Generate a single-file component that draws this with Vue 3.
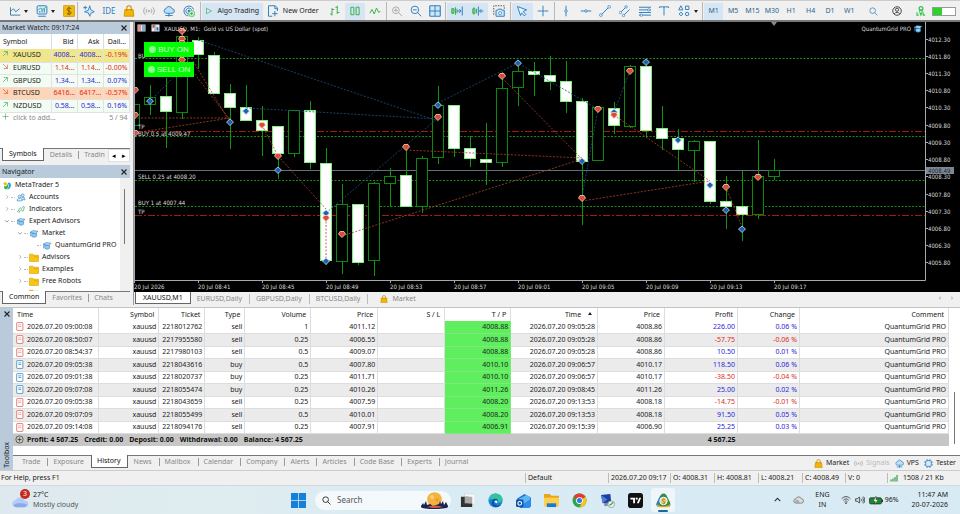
<script setup>
const b = '#2f7fc1'
const g = '#35b24a'
const s = (c, d, extra = '') => `<path d="${d}" fill="none" stroke="${c}" stroke-width="1.3" ${extra}/>`
const bag = '<path d="M2.500 6h11l1 9h-13z" fill="#f2b600" stroke="#c98a00"/><path d="M5 8V4a3 3 0 0 1 6 0v4" fill="none" stroke="#c98a00" stroke-width="1.400"/>'
const cloud = '<path d="M4 11a3.200 3.200 0 0 1 .3-6.300A4 4 0 0 1 12 5a3 3 0 0 1 .3 6z" fill="#bfe0f7" stroke="#2f7fc1" stroke-width="1.200"/><path d="M8 11v3M3 14h10" stroke="#2f7fc1" stroke-width="1.200"/><circle cx="8" cy="14" r="1.300" fill="#2f7fc1"/>'
const hat = '<path d="M4 8v5c2 2 6 2 8.500 0V8z" fill="#8ecbf0" stroke="#2f7fc1"/><path d="M1 6l5-3 9 1-4 4z" fill="#b9e0f7" stroke="#2f7fc1" stroke-width="1.200"/><path d="M2 6.500V13" stroke="#2f7fc1" stroke-width="1.200"/>'
const icons = {
  line: s('#3c7fae', 'M2 3v10.500h13') + s('#3c7fae', 'M3 8l3-3 3 4 5-4'),
  frame: '<rect x="1.500" y="1" width="13" height="11" rx="1.500" fill="#d8ecfa" stroke="#2f7fc1" stroke-width="1.300"/>' + s(b, 'M3 15h10M5 10V8M8 10V6M11 10V5') + s(g, 'M3 7l3-3 3 2 4-3'),
  dollar: '<rect x=".5" y=".5" width="15" height="15" rx="1.500" fill="#f0b90b" stroke="#c99700"/><path d="M11 5C9 3 5 4 5.500 6.300S11 8.500 11 10.300 6.500 13 5 11M8 2.500v11" fill="none" stroke="#7c5a00" stroke-width="1.300"/>',
  sparkle: '<path d="M9 1l1.500 5.500L15 9l-4.500 2L9 15l-2-4.500L2 9l5-2z" fill="#cfe7f8" stroke="#2f7fc1" stroke-width="1.200"/>' + s(b, 'M3 1v5M.5 3.500h5'),
  bag,
  signal: '<circle cx="8" cy="8" r="1.500" fill="#aaa"/>' + s('#aaa', 'M5.500 5a4 4 0 0 0 0 6M10.500 5a4 4 0 0 1 0 6M3 3a7 7 0 0 0 0 10M13 3a7 7 0 0 1 0 10'),
  cloud,
  target: s(b, 'M14 6A6.500 6.500 0 1 0 7 14.500M11.500 6.500A4 4 0 1 0 7 12') + '<circle cx="8" cy="8" r="1.800" fill="#2f7fc1"/><circle cx="11.500" cy="11.500" r="4" fill="#d9f5dc" stroke="#35b24a"/>' + s(g, 'M9.500 11.500h4M11.500 9.500v4'),
  play: s(g, 'M3 2.500l10 5.500-10 5.500z'),
  doc: s(b, 'M11 1H2v14h5M11 1l3 3v4M10.500 1v4H14') + s(b, 'M7 11.500h7M10.500 8v7', 'stroke-width="2"'),
  bars: s(g, 'M4 4v10M1.500 12H4M4 6h3M11 1v11M8.500 3H11M11 10h3'),
  candles: s(g, 'M2.500 3h4v10h-4zM9.500 3h4v10h-4z'),
  wave: s(g, 'M1 11l3-5 3 6 3-8 3 6 2-2'),
  zin: s('#aaa', 'M11 7A4.500 4.500 0 1 1 2 7a4.500 4.500 0 0 1 9 0zM10 10l5 5M4 7h5M6.500 4.500v5'),
  zout: s(b, 'M11.500 6.500a5 5 0 1 1-10 0 5 5 0 0 1 10 0zM10 10l5 5M4 6.500h5'),
  grid: '<rect x="1" y="1" width="14" height="14" rx="1" fill="#cfe7f8" stroke="#2f7fc1" stroke-width="1.500"/>' + s(b, 'M8 1v14M1 8h14'),
  shiftr: s(g, 'M2.500 4v8M1 5h3v6H1zM6 3v10M8 5v6') + s(b, 'M8 8h5M11 5.500L13.500 8 11 10.500M15 2v12'),
  shiftl: s(g, 'M2.500 3v10M1 5h3v6H1zM6 5v6') + s(b, 'M8.500 2v12M15 8h-5M12.500 5.500L10 8l2.500 2.500'),
  camera: s('#555', 'M1 13V1h14v4', 'stroke-dasharray="2 1.500"') + '<path d="M4 7h2l1-1.500h4L12 7h3v8H4z" fill="#cfe7f8" stroke="#2f7fc1" stroke-width="1.300"/><circle cx="9.500" cy="11" r="2" fill="#fff" stroke="#2f7fc1"/>',
  cursor: '<path d="M2 2l12 4.500-4.500 2.200L13 12.500 11 14.500 7.500 10.500 6 14z" fill="#e8f4fc" stroke="#2f7fc1" stroke-width="1.300"/>',
  cross: s(b, 'M8 1v5M8 10v5M1 8h5M10 8h5M8 6v4M6 8h4'),
  vline: s(b, 'M8 1v14') + '<circle cx="8" cy="8" r="1.700" fill="#d9ecfa" stroke="#2f7fc1"/>',
  hline: s(b, 'M1 8h14') + '<circle cx="8" cy="8" r="1.700" fill="#d9ecfa" stroke="#2f7fc1"/>',
  trend: s(b, 'M3 13L13 3') + '<circle cx="2.500" cy="13.500" r="1.800" fill="#fff" stroke="#2f7fc1"/><circle cx="13.500" cy="2.500" r="1.800" fill="#fff" stroke="#2f7fc1"/>',
  channel: s(b, 'M2 10L9 3M6 14l8-8') + '<circle cx="2" cy="10" r="1.600" fill="#fff" stroke="#2f7fc1"/><circle cx="9.500" cy="2.500" r="1.600" fill="#fff" stroke="#2f7fc1"/><circle cx="6" cy="14" r="1.600" fill="#fff" stroke="#2f7fc1"/>',
  fib: s(b, 'M0 3h16M0 6.500h16M0 10h16M0 13.500h16') + '<circle cx="13" cy="6.500" r="1.600" fill="#fff" stroke="#2f7fc1"/><circle cx="3" cy="13.500" r="1.600" fill="#fff" stroke="#2f7fc1"/>',
  text: s(b, 'M2 4V2.500h12V4M8 2.500V14'),
  shapes: s(b, 'M1 6.500L3.800 1l2.700 5.500zM10 1.500h4.500V6H10zM14.500 12a2.300 2.300 0 1 1-4.600 0 2.300 2.300 0 0 1 4.600 0zM4 9.500L6.500 12 4 14.500 1.500 12z'),
  search: s(b, 'M11.500 6.500a5 5 0 1 1-10 0 5 5 0 0 1 10 0zM10 10l5 5', 'stroke-width="1.600"'),
  user: '<circle cx="8" cy="8" r="6.800" fill="none" stroke="#333" stroke-width="1.400"/><circle cx="8" cy="6" r="2.500" fill="none" stroke="#333" stroke-width="1.400"/>' + s('#333', 'M3.500 12.500c2-3 7-3 9 0'),
  level: '<circle cx="8" cy="4" r="3" fill="none" stroke="#35c24a" stroke-width="2"/><path d="M5 9l3-3 3 3M1.500 10v4.500h3M6 10l1.700 4.500L9.500 10M11.500 10v4.500h3" fill="none" stroke="#35c24a" stroke-width="1.800"/>',
  hat,
  up: s('#2ca04a', 'M3 13L12 4M5 3.500h7.500V11', 'stroke-linecap="square"'),
  down: s('#e0452c', 'M3 3l9 9M12.500 5v7.500H5', 'stroke-linecap="square"'),
  plus: s('#35a24a', 'M8 1v14M1 8h14'),
  close: '<path d="M3 3l10 10M13 3L3 13" stroke="#222" stroke-width="2.200"/>',
  right: s('#777', 'M6 3l5 5-5 5'),
  downc: s('#333', 'M3 6l5 5 5-5'),
  mt: '<path d="M1 4C4 1 8 2 8 5s-3 4-5 2z" fill="#f2c20c"/><path d="M9 4c3-3 6 0 6 4s-3 7-7 7c3-3 5-7 1-11z" fill="#2b9be0"/><path d="M3 9c3 1 6 0 6-4 3 4 1 9-3 10-3 0-4-4-3-6z" fill="#38b44a"/>',
  people: '<path d="M1 14c0-4 2-5 4.500-5S10 10 10 14z" fill="#d8ecfa" stroke="#2f7fc1"/><circle cx="5.500" cy="6" r="2.500" fill="#d8ecfa" stroke="#2f7fc1"/><circle cx="11" cy="4" r="2.500" fill="#d8ecfa" stroke="#2f7fc1"/><path d="M9 8c4-2 6 0 6 4h-5" fill="#b9dcf5" stroke="#2f7fc1"/>',
  indi: s(g, 'M1 12c3 0 3-7 6-7s1 6 4 6 1-8 4-8') + s(b, 'M4 14l3-5 M10 5l3-3'),
  folder: '<path d="M0 2h6l1.500 2H16v11H0z" fill="#f9c513" stroke="#d59b00"/><path d="M9 4.500V7H16" fill="none" stroke="#d59b00"/>',
  chip: '<rect x="3" y="3" width="10" height="10" rx="1.500" fill="#d8ecfa" stroke="#2f7fc1" stroke-width="1.500"/>' + s(b, 'M5.500 0v3M10.500 0v3M5.500 13v3M10.500 13v3M0 5.500h3M0 10.500h3M13 5.500h3M13 10.500h3'),
  sell: '<rect x="3" y="1" width="11" height="14" rx="1" fill="#fff" stroke="#e0554c" stroke-width="1.300"/><path d="M6 5h2M9.500 5h1.500M6 8h2M9.500 8h1.500" stroke="#e0554c" stroke-width="1.300"/>',
  buy: '<rect x="3" y="1" width="11" height="14" rx="1" fill="#fff" stroke="#2f7fc1" stroke-width="1.300"/><path d="M6 5h5M6 8h5" stroke="#2f7fc1" stroke-width="1.300"/>',
  circ: '<circle cx="8" cy="8" r="6.500" fill="none" stroke="#333" stroke-width="1.200"/>' + s('#333', 'M8 4.500v7M4.500 8h7'),
  net: '<path d="M1 15v-4M5 15V9M9 15V6M13 15V2" stroke="#2ca04a" stroke-width="2.400"/>',
  win: '<path d="M0 0h7.600v7.600H0zM8.400 0H16v7.600H8.400zM0 8.400h7.600V16H0zM8.400 8.400H16V16H8.400z" fill="#1580d8"/>',
  glass: '<path d="M11.500 6.500a5 5 0 1 1-10 0 5 5 0 0 1 10 0zM10 10l5 5" fill="none" stroke="#333" stroke-width="1.700"/>',
  tasks: '<rect x="5" y="1" width="11" height="11" fill="#f6f6f6" stroke="#ccc" stroke-width=".5"/><path d="M1 4h8v7h4v4H1z" fill="#333"/><path d="M5 4h8v7H5z" fill="#aaa"/>',
  edge: '<circle cx="8" cy="8" r="7.500" fill="#1683d8"/><path d="M.6 8C1 3.500 4 .5 8 .5s7.500 3 7.500 6.500c0 2-2 3.500-4.500 3.500 1-4-7-5.500-10.400-2.500z" fill="#35c2a0"/><path d="M6 9c0 4 4 6 8 3-2 4-9 4-10-1 0-3 2-5 4-5s3 2 2 3.500C9 8 7 7.500 6 9z" fill="#0b4f9c"/><path d="M10 10.500c-1 1-2-.5-3-1 0-2 3-2 3-.5z" fill="#e8f8ff"/>',
  outlook: '<path d="M1 6l8-5 7 4v9l-3 2H4z" fill="#1d6fd1"/><path d="M3 6l8-4 4 2v4L9 12z" fill="#5ab8f5"/><path d="M6 13l10-7v8l-2 2H6z" fill="#2d8ceb"/><rect y="7" width="8" height="8" rx="1.500" fill="#0f4fa8"/><circle cx="4" cy="11" r="2" fill="none" stroke="#fff" stroke-width="1.200"/>',
  explorer: '<path d="M0 1h6l2 2h8v10H0z" fill="#eaa41a"/><path d="M0 5h16v9.500H0z" fill="#fcd04f"/><path d="M3 11h10v4H3z" fill="#1c78cf"/>',
  chrome: '<circle cx="8" cy="8" r="7.500" fill="#32a350"/><path d="M8 8L1.500 4.200A7.500 7.500 0 0 1 14.500 4.300z" fill="#e23c2f"/><path d="M8 8l6.500-3.700A7.500 7.500 0 0 1 8 15.500l3-6z" fill="#f9c51c"/><circle cx="8" cy="8" r="3.600" fill="#fff"/><circle cx="8" cy="8" r="2.700" fill="#2f78e8"/>',
  pc: '<path d="M1 2l10-1 1 9-9 1z" fill="#1c3f9e"/><path d="M1 2l7 5-5 4z" fill="#4d7cdc"/><path d="M4 11l6-1 1 3-6 1z" fill="#7d8ca8"/><circle cx="12" cy="12" r="3.600" fill="#e7efe8" stroke="#9aa"/>' + s('#35a24a', 'M10 13l2-1 2-2'),
  tv: '<rect width="16" height="16" rx="3" fill="#111"/><path d="M2.500 5h5v6H5.500V7h-3zM11.500 11h-2L12 5h2z" fill="#fff"/><circle cx="9.300" cy="6" r="1.100" fill="#fff"/>',
  mtbig: '<path d="M5 2c2-2 4-2 6 0l4 8c1 3 0 5-3 5H4c-3 0-4-2-3-5z" fill="#378b42"/><path d="M4 4l3-2-3 8-1 4C0 14 0 12 1 10z" fill="#2a7fc0"/><path d="M1 12c4 3 10 3 14 0-.3 2-1 3.300-3 3.300H4c-2 0-3-1.300-3-3.300z" fill="#e8b41e"/><circle cx="8" cy="8.500" r="4" fill="#e8cf77" stroke="#fff"/><path d="M9.500 7C8 6 6.500 6.500 7 8s3 1 2.500 2.500S7.500 11.500 6.500 10.500" fill="none" stroke="#8a6a10" stroke-width=".8"/>',
  upc: '<path d="M3 10l5-5 5 5" fill="none" stroke="#333" stroke-width="1.800"/>',
  cloudy: '<path d="M4 13a3.500 3.500 0 0 1 0-7A4.500 4.500 0 0 1 12.500 6a3.500 3.500 0 0 1 0 7z" fill="#ddd" stroke="#555"/><path d="M4 13a3.500 3.500 0 0 1 0-5c3-1 5 1 6 5z" fill="#aaa"/>',
  wifi: s('#333', 'M1 6c4-4.500 10-4.500 14 0M3.500 8.500c3-3 6-3 9 0M5.500 11c2-2 3-2 5 0') + '<circle cx="8" cy="13" r="1.300" fill="#333"/>',
  sound: s('#333', 'M1 6h3l3-3v10l-3-3H1zM9.500 6c1 1 1 3 0 4M11.500 4c2.500 2 2.500 6 0 8M13.500 2.500c3 3 3 8 0 11'),
  battery: '<rect x=".5" y="4" width="17.500" height="9" rx="2" fill="#1c8a2c" stroke="#222"/><path d="M19.300 6.500v4" stroke="#222" stroke-width="1.500"/><path d="M10 1.500L6 9h3l-.5 4.500L13 7h-3z" fill="#fff" stroke="#222" stroke-width=".6"/>',
  book: '<rect width="16" height="14" y="1" fill="#dfe8ee"/><path d="M1 3h6v2H1zM1 7h6v2H1zM1 11h6v2H1z" fill="#d8452e"/><path d="M9 3h6v2H9zM9 7h6v2H9zM9 11h6v2H9z" fill="#2f6fb0"/>',
  trade: '<rect width="16" height="14" y="1" fill="#e8eef2"/><path d="M2 2v7l4-3V2z" fill="#d8452e"/><path d="M10 13V5l4 3v5z" fill="#2f6fb0"/><path d="M7 2v12" stroke="#333"/>',
}
const marketTools = [['sparkle', 'Assistant'], ['ide', 'IDE'], ['bag', 'Market'], ['signal', 'Signals'], ['cloud', 'VPS'], ['target', 'Community']]
const chartTools = [
  [['bars', 'Bar chart'], ['candles', 'Candlesticks', true], ['wave', 'Line chart']],
  [['zin', 'Zoom in'], ['zout', 'Zoom out'], ['grid', 'Tile windows']],
  [['shiftr', 'Scroll to end', true], ['shiftl', 'Chart shift', true], ['camera', 'Screenshot']],
  [['cursor', 'Cursor', true], ['cross', 'Crosshair']],
]
const drawTools = ['vline', 'hline', 'trend', 'channel', 'fib', 'text', 'shapes']
const frames = ['M1', 'M5', 'M15', 'M30', 'H1', 'H4', 'D1', 'W1']

const quotes = [
  ['XAUUSD', '4008...', '4008...', '-0.19%', 'up', 'gold', 'n', 'r'],
  ['EURUSD', '1.14...', '1.14...', '-0.00%', 'down', '', 'r', 'r'],
  ['GBPUSD', '1.34...', '1.34...', '0.07%', 'up', '', 'n', 'n'],
  ['BTCUSD', '6416...', '6417...', '-0.57%', 'down', 'peach', 'r', 'r'],
  ['NZDUSD', '0.58...', '0.58...', '0.16%', 'up', '', 'n', 'n'],
]
const tree = [
  ['Accounts', 'people', 'right', 0], ['Indicators', 'indi', 'right', 0], ['Expert Advisors', 'hat', 'downc', 0],
  ['Market', 'hat', 'downc', 1], ['QuantumGrid PRO', 'hat', '', 2],
  ['Advisors', 'folder', 'right', 1], ['Examples', 'folder', 'right', 1], ['Free Robots', 'folder', 'right', 1], ['', 'folder', '', 1],
]

// slot, high, low, body top, body bottom, 1 = falling
const candles = [
  [0, 82, 103, 82, 103, 0], [1, 63, 93, 75, 82, 0], [2, 56, 126, 74, 90, 1], [3, 8, 97, 14, 90, 0], [4, 15, 47, 18, 33, 1],
  [5, 30, 72, 33, 72, 1], [6, 62, 127, 71, 86, 1], [7, 63, 99, 85, 99, 1], [8, 84, 134, 98, 109, 1], [9, 104, 157, 104, 132, 1],
  [10, 88, 135, 88, 131, 0], [11, 79, 147, 88, 141, 1], [12, 126, 243, 141, 239, 1], [13, 162, 252, 182, 239, 0], [14, 182, 243, 182, 241, 1],
  [15, 160, 254, 161, 238, 0], [16, 146, 185, 154, 161, 0], [17, 125, 185, 153, 185, 1], [18, 134, 191, 136, 184, 0], [19, 64, 142, 83, 135, 0],
  [20, 83, 135, 83, 127, 1], [21, 114, 145, 126, 137, 1], [22, 101, 163, 137, 141, 1], [23, 50, 145, 66, 140, 0], [24, 38, 84, 49, 65, 0],
  [25, 40, 74, 49, 53, 1], [26, 34, 68, 53, 60, 1], [27, 39, 91, 59, 80, 1], [28, 76, 203, 79, 140, 1], [29, 85, 138, 85, 138, 0],
  [30, 80, 112, 86, 104, 1], [31, 43, 106, 44, 104, 0], [32, 37, 116, 44, 109, 1], [33, 84, 128, 106, 117, 1], [34, 107, 149, 116, 128, 1],
  [35, 118, 160, 119, 128, 0], [36, 119, 182, 119, 180, 1], [37, 154, 207, 179, 185, 1], [38, 149, 219, 184, 193, 1], [39, 118, 197, 154, 192, 0],
  [40, 137, 158, 148, 154, 0],
]
const wicks = c => `M${c[0] * 16 + 0.5} ${c[1]}V${c[3]}M${c[0] * 16 + 0.5} ${c[4]}V${c[2]}`
const reds = [[48, 9], [48, 17], [48, 21], [48, 38], [1, 68], [1, 93], [1, 111], [128, 103], [144, 134], [192, 196], [208, 212], [272, 125], [304, 95], [368, 54], [448, 176], [464, 87], [480, 93], [496, 49], [592, 165], [624, 155]]
const blues = [[16, 79], [96, 100], [112, 89], [144, 148], [192, 191], [192, 239], [304, 83], [384, 41], [448, 139], [480, 90], [512, 40], [544, 118], [576, 163], [592, 188], [608, 207]]
const redPath = 'M48 21L96 100M50 38L96 98M0 111L96 96M0 96H96M128 103L144 134L192 187M192 196V239M208 214L448 137M272 128L448 136M368 56L448 137M448 179L576 159M480 93L576 159M592 165L608 205M48 9V38'
const bluePath = 'M16 79L48 47M64 18L304 99M112 86L304 97M192 191L304 96M304 81L384 41L464 87M448 175L464 87M480 90L496 49'
const prices = ['4012.30', '4011.80', '4011.30', '4010.80', '4010.30', '4009.80', '4009.30', '4008.80', '4008.30', '4007.80', '4007.30', '4006.80', '4006.30', '4005.80']
const priceY = i => Math.round(17.5 + i * 17.23)
const times = ['2026', '08:41', '08:45', '08:49', '08:53', '08:57', '09:01', '09:05', '09:09', '09:13', '09:17']
const orders = [['BU', 36], ['TP', 107], ['BUY 0.5 at 4009.47', 114], ['SELL 0.25 at 4008.20', 157], ['BUY 1 at 4007.44', 183], ['TP', 192]]

const cols = [['Time', 86], ['Symbol', 60], ['Ticket', 46], ['Type', 40], ['Volume', 66], ['Price', 67], ['S / L', 67], ['T / P', 66], ['Time', 87], ['Price', 67], ['Profit', 73], ['Change', 62], ['Comment', 149]]
const deals = [
  ['2026.07.20 09:00:08', '2218012762', 'sell', '1', '4011.12', '4008.88', '2026.07.20 09:05:28', '4008.86', '226.00', '0.06 %'],
  ['2026.07.20 08:50:07', '2217955580', 'sell', '0.25', '4006.55', '4008.88', '2026.07.20 09:05:28', '4008.86', '-57.75', '-0.06 %'],
  ['2026.07.20 08:54:37', '2217980103', 'sell', '0.5', '4009.07', '4008.88', '2026.07.20 09:05:28', '4008.86', '10.50', '0.01 %'],
  ['2026.07.20 09:05:38', '2218043616', 'buy', '0.5', '4007.80', '4010.10', '2026.07.20 09:06:57', '4010.17', '118.50', '0.06 %'],
  ['2026.07.20 09:01:38', '2218020737', 'buy', '0.25', '4011.71', '4010.10', '2026.07.20 09:06:57', '4010.17', '-38.50', '-0.04 %'],
  ['2026.07.20 09:07:08', '2218055474', 'buy', '0.25', '4010.26', '4011.26', '2026.07.20 09:08:45', '4011.26', '25.00', '0.02 %'],
  ['2026.07.20 09:05:38', '2218043659', 'sell', '0.25', '4007.59', '4008.20', '2026.07.20 09:13:53', '4008.18', '-14.75', '-0.01 %'],
  ['2026.07.20 09:07:09', '2218055499', 'sell', '0.5', '4010.01', '4008.20', '2026.07.20 09:13:53', '4008.18', '91.50', '0.05 %'],
  ['2026.07.20 09:14:08', '2218094176', 'sell', '0.25', '4007.91', '4006.91', '2026.07.20 09:15:39', '4006.90', '25.25', '0.03 %'],
]
const totals = ['Profit: 4 567.25', 'Credit: 0.00', 'Deposit: 0.00', 'Withdrawal: 0.00', 'Balance: 4 567.25']
const sign = v => (v.startsWith('-') ? 'r' : 'n')
const boxTabs = ['Trade', 'Exposure', 'History', 'News', 'Mailbox', 'Calendar', 'Company', 'Alerts', 'Articles', 'Code Base', 'Experts', 'Journal']
const apps = [['tasks', 'Task view'], ['edge', 'Edge'], ['outlook', 'Outlook'], ['explorer', 'File Explorer'], ['chrome', 'Chrome'], ['pc', 'Remote desktop'], ['tv', 'TradingView'], ['mtbig', 'MetaTrader 5', true]]
</script>

<template>
  <div class="desk">
    <header class="toolbar">
      <div class="group first">
        <button class="tool" aria-label="Chart type"><svg class="ic" viewBox="0 0 16 16" v-html="icons.line" /><i class="caret" /></button>
        <button class="tool" aria-label="Indicators"><svg class="ic" viewBox="0 0 16 16" v-html="icons.frame" /><i class="caret" /></button>
        <button class="tool" aria-label="Deposit"><svg class="ic" viewBox="0 0 16 16" v-html="icons.dollar" /></button>
      </div>
      <div class="group ruled">
        <button v-for="t in marketTools" :key="t[0]" class="tool even" :aria-label="t[1]">
          <span v-if="t[0] === 'ide'" class="ide">IDE</span>
          <svg v-else class="ic" viewBox="0 0 16 16" v-html="icons[t[0]]" />
        </button>
      </div>
      <div class="group ruled">
        <button class="tool wide on"><svg class="ic sm" viewBox="0 0 16 16" v-html="icons.play" />Algo Trading</button>
        <button class="tool wide"><svg class="ic" viewBox="0 0 16 16" v-html="icons.doc" />New Order</button>
      </div>
      <div v-for="(grp, i) in chartTools" :key="i" class="group" :class="{ ruled: i > 0 }">
        <button v-for="t in grp" :key="t[0]" class="tool even" :class="{ on: t[2] }" :aria-label="t[1]"><svg class="ic" viewBox="0 0 16 16" v-html="icons[t[0]]" /></button>
      </div>
      <div class="group ruled draws">
        <button v-for="t in drawTools" :key="t" class="tool even" :aria-label="t"><svg class="ic" viewBox="0 0 16 16" v-html="icons[t]" /></button>
        <i class="caret" />
      </div>
      <div class="group ruled">
        <button v-for="(f, i) in frames" :key="f" class="tool even frame" :class="{ on: i === 0 }">{{ f }}</button>
      </div>
      <div class="group last">
        <button class="tool" aria-label="Search"><svg class="ic sm" viewBox="0 0 16 16" v-html="icons.search" /></button>
        <button class="tool" aria-label="Account"><svg class="ic sm" viewBox="0 0 16 16" v-html="icons.user" /></button>
        <button class="tool" aria-label="Level"><svg class="ic sm" viewBox="0 0 16 16" v-html="icons.level" /></button>
        <span class="meter" />
      </div>
    </header>

    <main class="work">
      <aside class="side">
        <div class="bar"><span>Market Watch: 09:17:24</span><button class="x" aria-label="Close Market Watch"><svg viewBox="0 0 16 16" v-html="icons.close" /></button></div>
        <table class="quotes">
          <thead><tr><th>Symbol</th><th>Bid</th><th>Ask</th><th>Dail...</th></tr></thead>
          <tbody>
            <tr v-for="q in quotes" :key="q[0]" :class="q[5]">
              <td><svg class="arrow" viewBox="0 0 16 16" v-html="icons[q[4]]" />{{ q[0] }}</td>
              <td :class="q[6]">{{ q[1] }}</td><td :class="q[6]">{{ q[2] }}</td><td :class="q[7]">{{ q[3] }}</td>
            </tr>
            <tr class="add"><td colspan="3"><svg class="arrow" viewBox="0 0 16 16" v-html="icons.plus" />click to add...</td><td>5 / 94</td></tr>
          </tbody>
        </table>
        <div class="blank" />
        <nav class="tabs">
          <button class="tab active">Symbols</button><button class="tab">Details</button><button class="tab cut">Tradin</button>
          <span class="pager"><button aria-label="Previous">◂</button><button aria-label="Next">▸</button></span>
        </nav>
        <div class="bar nav-bar"><span>Navigator</span><button class="x" aria-label="Close Navigator"><svg viewBox="0 0 16 16" v-html="icons.close" /></button></div>
        <div class="nav">
          <ul class="tree">
            <li class="root"><svg class="ti" viewBox="0 0 16 16" v-html="icons.mt" />MetaTrader 5</li>
            <li v-for="(n, i) in tree" :key="i" :class="'d' + n[3]">
              <svg v-if="n[2]" class="tw" viewBox="0 0 16 16" v-html="icons[n[2]]" /><i v-else class="tw" />
              <i class="dash" /><svg class="ti" viewBox="0 0 16 16" v-html="icons[n[1]]" />{{ n[0] }}
            </li>
          </ul>
          <div class="rail"><i /></div>
        </div>
        <nav class="tabs">
          <button class="tab active">Common</button><button class="tab">Favorites</button><button class="tab">Chats</button>
        </nav>
      </aside>

      <section class="chart">
        <div class="canvas">
          <svg class="plot" viewBox="0 0 826 270" role="img" aria-label="XAUUSD one minute candlestick chart">
            <rect width="826" height="270" fill="#000" />
            <g fill="none" stroke="#1b8a1b" stroke-dasharray="2 1.500"><path d="M1 36.500H791M1 114.500H791M1 158.500H791M1 184.500H791" /></g>
            <path d="M1 109.500H791M1 193.500H791" fill="none" stroke="#a51818" stroke-dasharray="7 2 2 2" />
            <path d="M1 148.500H791" stroke="#64707e" />
            <g v-for="c in candles" :key="c[0]">
              <path :d="wicks(c)" stroke="#0a9a0a" />
              <rect :x="c[0] * 16 - 5.5" :y="c[3] + 0.5" width="11" :height="Math.max(c[4] - c[3] - (c[5] ? 1 : 0), 1)" :fill="c[5] ? '#fff' : '#000'" :stroke="c[5] ? '#7df07d' : '#0a8a0a'" />
            </g>
            <path :d="redPath" fill="none" stroke="#b0442a" stroke-width=".8" stroke-dasharray="2 1.500" />
            <path :d="bluePath" fill="none" stroke="#1f4f85" stroke-width=".8" stroke-dasharray="2 1.500" />
            <path v-for="(m, i) in blues" :key="'b' + i" :transform="`translate(${m[0]} ${m[1]})`" d="M0-3L3.500 0 0 3.500-3.500 0z" fill="#1b62b0" stroke="#c5daf0" stroke-width=".8" />
            <path v-for="(m, i) in reds" :key="'r' + i" :transform="`translate(${m[0]} ${m[1]})`" d="M-2-2.500h4L3.500 0 0 3.500-3.500 0z" fill="#e04a30" stroke="#f6cfc4" stroke-width=".8" />
            <path d="M.5 0V258.500H791.500V0" fill="none" stroke="#a4a9b0" />
            <path d="M637 0h6l-3 4z" fill="#888" />
            <g class="ctext">
              <text v-for="o in orders" :key="o[1]" x="4" :y="o[1]">{{ o[0] }}</text>
              <text x="30" y="9">XAUUSD, M1:&#160; Gold vs US Dollar (spot)</text>
              <text x="777" y="9" text-anchor="end">QuantumGrid PRO</text>
              <g v-for="(p, i) in prices" :key="p"><path :d="`M792 ${priceY(i) - 0.5}h2`" stroke="#a4a9b0" /><text x="794" :y="priceY(i) + 2">{{ p }}</text></g>
              <rect x="792" y="145" width="28" height="7" fill="#7d8896" /><text x="794" y="151" class="now">4008.49</text>
              <g v-for="(t, i) in times" :key="t"><path :d="`M${i * 64 + 0.5} 258v3`" stroke="#a4a9b0" /><text :x="i * 64" y="267">20 Jul {{ t }}</text></g>
            </g>
            <svg x="3" y="2" width="9" height="8" viewBox="0 0 16 16" v-html="icons.book" />
            <svg x="17" y="2" width="9" height="8" viewBox="0 0 16 16" v-html="icons.trade" />
            <svg x="779" y="2" width="10" height="9" viewBox="0 0 16 16" v-html="icons.hat" />
          </svg>
          <div class="switches">
            <button><i />BUY ON</button>
            <button><i />SELL ON</button>
          </div>
        </div>
        <nav class="ctabs">
          <button class="active">XAUUSD,M1</button><button>EURUSD,Daily</button><button>GBPUSD,Daily</button><button>BTCUSD,Daily</button>
          <button class="mk"><svg viewBox="0 0 16 16" v-html="icons.bag" />Market</button>
          <span class="arrows"><span>‹</span><span>›</span></span>
        </nav>
      </section>
    </main>

    <section class="box">
      <div class="spine"><button class="x" aria-label="Close Toolbox"><svg viewBox="0 0 16 16" v-html="icons.close" /></button><span>Toolbox</span></div>
      <div class="boxmain">
        <div class="scroll">
          <table class="deals">
            <colgroup><col v-for="(c, i) in cols" :key="i" :style="{ width: c[1] / 9.36 + '%' }"></colgroup>
            <thead><tr><th v-for="(c, i) in cols" :key="i">{{ c[0] }}<i v-if="i === 8" class="sort" /></th></tr></thead>
            <tbody>
              <tr v-for="d in deals" :key="d[1]">
                <td><svg class="di" viewBox="0 0 16 16" v-html="icons[d[2]]" />{{ d[0] }}</td>
                <td>xauusd</td><td>{{ d[1] }}</td><td>{{ d[2] }}</td><td>{{ d[3] }}</td><td>{{ d[4] }}</td><td /><td class="tp">{{ d[5] }}</td>
                <td>{{ d[6] }}</td><td>{{ d[7] }}</td><td :class="sign(d[8])">{{ d[8] }}</td><td :class="sign(d[9])">{{ d[9] }}</td><td>QuantumGrid PRO</td>
              </tr>
              <tr class="total">
                <td colspan="10"><svg class="di" viewBox="0 0 16 16" v-html="icons.circ" /><span v-for="t in totals" :key="t">{{ t }}</span></td>
                <td>4 567.25</td><td colspan="2" />
              </tr>
            </tbody>
          </table>
          <div class="thumb"><i /></div>
        </div>
        <nav class="tabs boxtabs">
          <button v-for="t in boxTabs" :key="t" class="tab" :class="{ active: t === 'History' }">{{ t }}</button>
          <span class="services">
            <a href="#"><svg viewBox="0 0 16 16" v-html="icons.bag" />Market</a>
            <a href="#" class="off"><svg viewBox="0 0 16 16" v-html="icons.signal" />Signals</a>
            <a href="#"><svg viewBox="0 0 16 16" v-html="icons.cloud" />VPS</a>
            <a href="#"><svg viewBox="0 0 16 16" v-html="icons.chip" />Tester</a>
          </span>
        </nav>
      </div>
    </section>

    <div class="status">
      <span>For Help, press F1</span><span>Default</span><span>2026.07.20 09:17</span><span>O: 4008.31</span><span>H: 4008.81</span><span>L: 4008.21</span><span>C: 4008.49</span><span>V: 0</span>
      <span class="net"><svg viewBox="0 0 16 16" v-html="icons.net" />1508 / 21 Kb</span>
    </div>

    <footer class="task">
      <button class="weather">
        <span class="wicon">
          <svg viewBox="0 0 24 20"><path d="M6 18a5 5 0 0 1-1-10A7 7 0 0 1 18 9a4.500 4.500 0 0 1 1 9z" fill="#b5cdf5" /><path d="M2 15c5-4 15-2 19-1-1 3-2 4-4 4H6c-2 0-3-1-4-3z" fill="#8aa9e8" /></svg>
          <b>3</b>
        </span>
        <span class="wtext"><span>27°C</span><span class="dim">Mostly cloudy</span></span>
      </button>
      <div class="dock">
        <button class="start" aria-label="Start"><svg viewBox="0 0 16 16" v-html="icons.win" /></button>
        <label class="find">
          <svg viewBox="0 0 16 16" v-html="icons.glass" />
          <input type="text" placeholder="Search" aria-label="Search">
          <svg class="moon" viewBox="0 0 28 17"><circle cx="13.500" cy="7.500" r="7.300" fill="#f3b13d" /><circle cx="11" cy="5" r="2" fill="#f9cf74" /><circle cx="16" cy="8" r="1.600" fill="#e69a2c" /><path d="M0 14l2-3 1 2 2-4 1 4 3-1 3 2 3-1 3-1 1-3 1 3 2-3 1 4 2-3 2 4c1 2-3 3-13 3S-1 16 0 14z" fill="#1c2350" /><path d="M6 15q8-3 16 0-8 2-16 0" fill="#d65b45" /></svg>
        </label>
        <button v-for="a in apps" :key="a[0]" class="app" :class="{ open: a[2] }" :aria-label="a[1]"><svg viewBox="0 0 16 16" v-html="icons[a[0]]" /></button>
      </div>
      <div class="tray">
        <svg class="chev" viewBox="0 0 16 16" v-html="icons.upc" />
        <svg viewBox="0 0 16 16" class="cl" v-html="icons.cloudy" />
        <span class="lang"><span>ENG</span><span>IN</span></span>
        <svg viewBox="0 0 16 16" v-html="icons.wifi" />
        <svg viewBox="0 0 16 16" v-html="icons.sound" />
        <svg viewBox="0 0 20 16" class="bat" v-html="icons.battery" />
        <span>96%</span>
        <span class="clock"><span>11:47 AM</span><span>20-07-2026</span></span>
      </div>
    </footer>
  </div>
</template>

<style>
body { margin: 0; }
</style>

<style scoped>
.desk { display: flex; flex-direction: column; min-height: 100vh; background: #f0f0f0; color: #222; font: 7px/10px "Noto Sans", sans-serif; overflow: hidden; }
.desk * { box-sizing: border-box; }
button { font: inherit; color: inherit; background: none; border: 0; padding: 0; margin: 0; white-space: nowrap; }
svg { display: block; flex: none; }
.n { color: #2a22e0; }
.r { color: #e02a22; }

.toolbar { display: grid; grid-template-columns: 77fr 123fr 124fr 62fr 59fr 65fr 44fr 148fr 158fr 100fr; height: 22px; padding-top: 1px; border-bottom: 2px solid #777; border-top: 1px solid #ccc; }
.group { display: flex; align-items: center; min-width: 0; padding: 0 1px; }
.ruled { border-left: 1px solid #b8b8b8; }
.tool { display: flex; align-items: center; justify-content: center; height: 17px; gap: 4px; min-width: 0; }
.even { flex: 1 1 0; }
.on { background: #d5e5f3; }
.ic { width: 12px; height: 12px; }
.ic.sm { width: 8px; height: 8px; }
.first { padding-left: 9px; gap: 8px; }
.first .tool { gap: 3px; }
.caret { display: block; border: 2px solid transparent; border-top: 3px solid #222; border-bottom: 0; }
.ide { font-size: 8px; color: #2f7fc1; }
.wide { flex: 1 1 0; }
.frame { color: #2a648f; }
.draws { padding-right: 4px; }
.last { gap: 14px; padding: 0 4px 0 9px; }
.last .ic { width: 9px; height: 9px; }
.last .tool:nth-child(2) .ic { width: 10px; height: 10px; }
.last .tool:nth-child(3) .ic { width: 10px; height: 12px; }
.meter { flex: 1; height: 9px; border: 1px solid #999; margin-left: -8px; background: linear-gradient(90deg, #2bd42b 42%, #fff 42%); }

.work { display: flex; align-items: flex-start; }
.side { width: 134px; flex: none; padding-right: 3px; border-right: 1px solid #999; display: flex; flex-direction: column; align-self: stretch; }
.bar { display: flex; align-items: center; justify-content: space-between; height: 12px; padding: 0 2px; background: #b9cadb; color: #222; }
.x { width: 8px; height: 8px; }
.x svg { width: 8px; height: 8px; }
.quotes { width: 100%; border-collapse: collapse; table-layout: fixed; background: #fff; }
.quotes th { font-weight: 400; text-align: right; height: 15px; padding: 0 3px; border-right: 1px solid #ddd; }
.quotes th:first-child { width: 51px; text-align: left; }
.quotes th:nth-child(2), .quotes th:nth-child(3) { width: 26px; }
.quotes td { height: 12px; padding: 0 2px; text-align: right; border: 1px solid #e2e2e2; border-width: 0 1px 1px 0; background: #f3fcf3; white-space: nowrap; }
.quotes tr:nth-child(odd) td { height: 13px; }
.quotes td:first-child { text-align: left; padding-left: 2px; }
.quotes .gold td { background: #f0e68c; }
.quotes .peach td { background: #ffd5b8; }
.quotes .add td { background: #fff; color: #888; border: 0; }
.arrow { display: inline-block; width: 7px; height: 7px; margin-right: 4px; }
.blank { background: #fff; height: 23px; flex: 1 0 auto; }
.tabs { display: flex; align-items: flex-start; height: 14px; border-top: 1px solid #777; padding-left: 2px; color: #888; }
.tab { height: 12px; padding: 0 7px; position: relative; }
.tab + .tab:not(.active)::before { content: ""; position: absolute; left: 0; top: 2px; height: 8px; border-left: 1px solid #999; }
.tab.active { color: #111; background: #fff; border: 1px solid #666; border-top: 0; margin-top: -1px; height: 13px; padding: 0 6px; }
.active + .tab:not(.active)::before { display: none; }
.side .tab { padding: 0 6px; }
.side .tab.cut { padding-right: 0; text-align: left; }
.pager { margin-left: auto; display: flex; background: #fff; border: 1px solid #ddd; color: #000; }
.pager button { width: 10px; height: 11px; }
.nav-bar { margin-top: 3px; height: 13px; }
.nav { display: flex; height: 113px; background: #fff; overflow: hidden; }
.tree { list-style: none; margin: 0; padding: 1px 0 0; flex: 1; }
.tree li { display: flex; align-items: center; height: 12px; }
.tree .root { padding-left: 2px; }
.tree .d0 { padding-left: 4px; }
.tree .d1 { padding-left: 17px; }
.tree .d2 { padding-left: 30px; }
.tw { width: 6px; height: 6px; flex: none; }
.dash { width: 4px; border-top: 1px dotted #bbb; margin: 0 1px; }
.ti { width: 10px; height: 9px; margin-right: 3px; }
.rail { width: 10px; background: #f0f0f0; padding: 11px 4px 0; }
.rail i { display: block; width: 1px; height: 55px; background: #777; }

.chart { flex: 1; min-width: 0; }
.canvas { position: relative; }
.plot { width: 100%; height: auto; }
.ctext { font: 6px "DejaVu Sans Condensed", "DejaVu Sans", sans-serif; fill: #dcdcdc; }
.now { fill: #1c2530; }
.switches { position: absolute; left: 10px; top: 20px; display: grid; gap: 5px; }
.switches button { width: 50px; height: 15px; background: #0f0; color: #dfffdf; font: 8px/15px "Liberation Sans", sans-serif; display: flex; align-items: center; justify-content: center; gap: 2px; }
.switches i { width: 7px; height: 7px; border-radius: 50%; background: #8dfc8d; }
.ctabs { display: flex; height: 13px; color: #888; padding-left: 1px; }
.ctabs button { padding: 0 7px 0 6px; display: flex; align-items: center; border-right: 1px solid #bbb; height: 10px; margin-top: 2px; }
.ctabs .active { background: #fff; color: #111; border: 1px solid #666; border-top: 0; height: 12px; margin-top: 0; padding: 0 7px; }
.ctabs .mk { border: 0; gap: 4px; padding-left: 12px; }
.mk svg { width: 8px; height: 8px; }
.arrows { margin-left: auto; display: flex; gap: 10px; padding: 1px 7px 0 0; }

.box { display: flex; border-top: 1px solid #c4c4c4; margin-top: 2px; }
.spine { width: 13px; flex: none; background: #b9cadb; display: flex; flex-direction: column; align-items: center; justify-content: space-between; padding: 2px 0; }
.spine span { writing-mode: vertical-rl; transform: rotate(180deg); }
.boxmain { flex: 1; min-width: 0; }
.scroll { display: flex; background: #fff; padding-bottom: 9px; }
.deals { flex: 1; width: 100%; table-layout: fixed; border-collapse: collapse; }
.deals th { font-weight: 400; text-align: right; height: 13px; padding: 0 4px; border-right: 1px solid #ddd; }
.deals th:first-child, .deals td:first-child { text-align: left; }
.deals td { height: 12px; padding: 0 2px; text-align: right; border-right: 1px solid #ddd; border-bottom: 1px solid #ddd; white-space: nowrap; }
.deals tr:nth-child(even) td { height: 13px; background: #ebebeb; }
.deals .di { display: inline-block; vertical-align: middle; width: 9px; height: 9px; margin-right: 3px; }
.deals .tp, .deals tr:nth-child(even) .tp { background: #5eee5e; border-color: #7fe87f; }
.deals .total td, .deals tr:nth-child(even).total td { background: #c6c6c6; border: 0; font-weight: 700; color: #111; }
.total span { margin-right: 6px; }
.sort { display: inline-block; border: 2px solid transparent; border-bottom: 3px solid #222; border-top: 0; margin: 0 1px 2px 7px; }
.thumb { width: 11px; flex: none; padding: 84px 5px 0; }
.thumb i { display: block; width: 1px; height: 52px; background: #777; }
.boxtabs { height: 15px; padding-left: 3px; }
.boxtabs .tab { padding-left: 6px; }
.boxtabs .tab.active { padding: 0 6px 0 5px; }
.services { margin-left: auto; display: flex; gap: 5px; padding: 2px 4px 0 0; }
.services a { display: flex; align-items: center; gap: 3px; color: #222; text-decoration: none; }
.services .off { color: #bbb; }
.services svg { width: 9px; height: 9px; }

.status { display: grid; grid-template-columns: 525fr 83fr 62fr 44fr 44fr 44fr 43fr 42fr 73fr; height: 15px; border-top: 1px solid #ccc; align-items: center; }
.status span { border-left: 1px solid #bbb; padding-left: 2px; white-space: nowrap; }
.status span:first-child { border: 0; padding-left: 1px; }
.status .net { display: flex; align-items: center; gap: 4px; }
.net svg { width: 9px; height: 8px; }

.task { flex: 1; min-height: 29px; display: grid; grid-template-columns: 1fr auto 1fr; align-items: center; background: linear-gradient(90deg, #dde9ee, #e0edf0 22%, #d9ebf4 45%, #d8eaf3); border-top: 1px solid #d0dade; }
.weather { display: flex; align-items: center; gap: 4px; padding-left: 12px; text-align: left; }
.wicon { position: relative; padding-top: 3px; }
.wicon svg { width: 17px; height: 15px; }
.wicon b { position: absolute; top: -2px; right: -1px; width: 10px; height: 10px; border-radius: 50%; background: #c42b1c; color: #fff; text-align: center; font-weight: 400; }
.wtext, .lang, .clock { display: grid; }
.dim { color: #555; }
.dock { display: flex; align-items: center; padding-left: 8px; }
.start { margin-right: 9px; }
.start svg { width: 15px; height: 15px; }
.find { display: flex; align-items: center; width: 136px; height: 19px; border-radius: 10px; background: #f4f9fc; padding: 0 2px 0 7px; margin-right: 2px; }
.find svg { width: 9px; height: 9px; }
.find input { flex: 1; min-width: 0; border: 0; background: none; font: 8px/10px "Noto Sans", sans-serif; padding: 0 0 0 6px; color: #555; outline: 0; }
.find input::placeholder { color: #555; opacity: 1; }
.find .moon { width: 28px; height: 17px; }
.app { width: 24px; height: 24px; margin: 0 2px; display: grid; place-items: center; border-radius: 3px; position: relative; }
.app svg { width: 15px; height: 15px; }
.app.open { background: #eef6fa; }
.app.open::after { content: ""; position: absolute; bottom: 0; left: 7px; width: 10px; height: 2px; border-radius: 1px; background: #1a6b95; }
.tray { display: flex; align-items: center; justify-content: flex-end; gap: 4px; padding-right: 12px; }
.tray svg { width: 10px; height: 10px; }
.tray .chev { width: 9px; margin-right: 7px; }
.tray .cl { width: 11px; }
.lang { text-align: center; margin: 0 7px; }
.tray .bat { width: 14px; height: 11px; margin-right: -2px; }
.clock { text-align: right; margin-left: 9px; }
</style>
